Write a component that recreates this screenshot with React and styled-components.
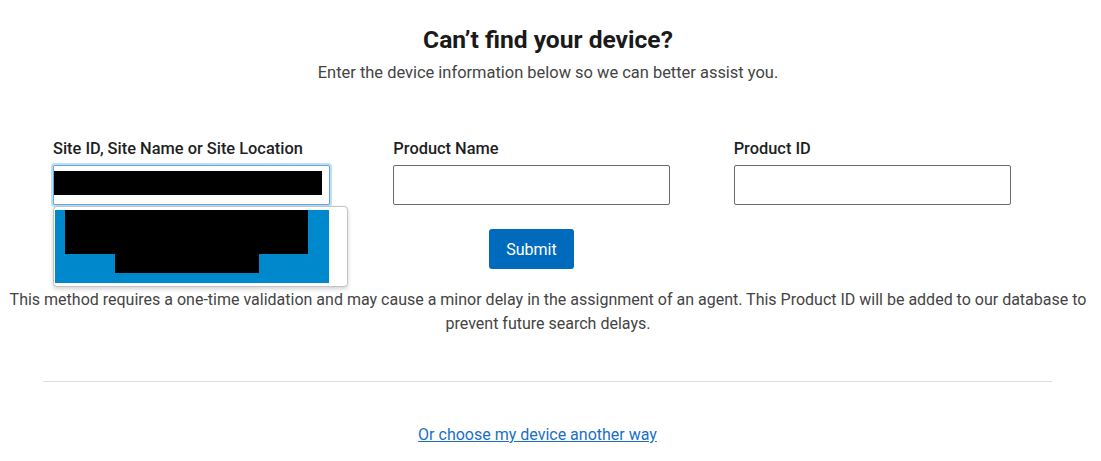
import React from "react";
import styled, { createGlobalStyle } from "styled-components";

const Global = createGlobalStyle`
  html, body { margin: 0; padding: 0; background: #fff; }
  body { font-family: Roboto, "Liberation Sans", Arial, sans-serif; color: #212529; }
  * { box-sizing: border-box; }
`;

const Page = styled.main`
  width: 1101px;
  padding-top: 25px;
  padding-right: 5px;
`;

const Title = styled.h1`
  margin: 0;
  font-size: 24.6px;
  line-height: 30px;
  font-weight: 700;
  text-align: center;
  color: #1a1a1a;
`;

const Subtitle = styled.p`
  margin: 6px 0 0;
  font-size: 16.45px;
  line-height: 24px;
  text-align: center;
  color: #444;
`;

const FieldRow = styled.div`
  display: grid;
  grid-template-columns: repeat(3, 340.33px);
  margin: 51px 0 0 42px;
`;

const Field = styled.div`
  padding: 0 11px;
  display: flex;
  flex-direction: column;
  gap: 4px;
`;

const Label = styled.label`
  font-size: 16.4px;
  line-height: 25px;
  font-weight: 500;
  color: #1f1f1f;
`;

const InputWrap = styled.div`
  position: relative;
  width: 277px;
`;

const Input = styled.input`
  display: block;
  width: 277px;
  height: 40px;
  border: 1px solid ${(p) => (p.$focused ? "#5fa8e6" : "#6b6b6b")};
  border-radius: 2px;
  padding: 0 8px;
  font: inherit;
  background: #fff;
  outline: none;
  box-shadow: ${(p) => (p.$focused ? "0 0 0 2px #bfdcf5" : "none")};
`;

const Redacted = styled.span`
  position: absolute;
  background: #000;
  left: ${(p) => p.$x}px;
  top: ${(p) => p.$y}px;
  width: ${(p) => p.$w}px;
  height: ${(p) => p.$h}px;
`;

const Dropdown = styled.ul`
  position: absolute;
  left: 0;
  top: 41px;
  width: 295px;
  height: 81px;
  margin: 0;
  padding: 3px 0 0 1px;
  list-style: none;
  background: #fff;
  border: 1px solid #c4c4c4;
  border-radius: 4px;
  box-shadow: 0 2px 4px rgba(0, 0, 0, 0.18);
  z-index: 2;
`;

const Option = styled.li`
  position: relative;
  width: 274px;
  height: 73px;
  background: ${(p) => (p.$active ? "#0088cc" : "#fff")};
`;

const SubmitRow = styled.div`
  display: flex;
  justify-content: center;
  padding-right: 33px;
  margin-top: 24px;
`;

const Button = styled.button`
  width: 85px;
  height: 40px;
  border: none;
  border-radius: 3px;
  background: #006bbd;
  color: #fff;
  font: inherit;
  font-size: 16px;
  cursor: pointer;
`;

const Note = styled.p`
  margin: 19px 0 0;
  font-size: 16px;
  line-height: 24px;
  text-align: center;
  color: #444;
`;

const Divider = styled.hr`
  margin: 45px 44px 0 43px;
  border: none;
  border-top: 1px solid #ddd;
  height: 0;
`;

const LinkRow = styled.div`
  margin-top: 41px;
  text-align: center;
  padding-right: 21px;
`;

const Link = styled.a`
  font-size: 16px;
  line-height: 24px;
  color: #1a6fc4;
  text-decoration: underline;
`;

export default function App() {
  return (
    <Page>
      <Global />
      <Title>Can’t find your device?</Title>
      <Subtitle>Enter the device information below so we can better assist you.</Subtitle>
      <FieldRow>
        <Field>
          <Label>Site ID, Site Name or Site Location</Label>
          <InputWrap>
            <Input $focused readOnly aria-label="Site ID, Site Name or Site Location" />
            <Redacted $x={1} $y={6} $w={268} $h={24} />
            <Dropdown>
              <Option $active>
                <Redacted $x={10} $y={0} $w={243} $h={44} />
                <Redacted $x={60} $y={44} $w={144} $h={19} />
              </Option>
            </Dropdown>
          </InputWrap>
        </Field>
        <Field>
          <Label>Product Name</Label>
          <InputWrap>
            <Input aria-label="Product Name" />
          </InputWrap>
        </Field>
        <Field>
          <Label>Product ID</Label>
          <InputWrap>
            <Input aria-label="Product ID" />
          </InputWrap>
        </Field>
      </FieldRow>
      <SubmitRow>
        <Button>Submit</Button>
      </SubmitRow>
      <Note>
        This method requires a one-time validation and may cause a minor delay in the assignment of an agent. This Product ID will be added to our database to prevent future search delays.
      </Note>
      <Divider />
      <LinkRow>
        <Link href="#">Or choose my device another way</Link>
      </LinkRow>
    </Page>
  );
}
